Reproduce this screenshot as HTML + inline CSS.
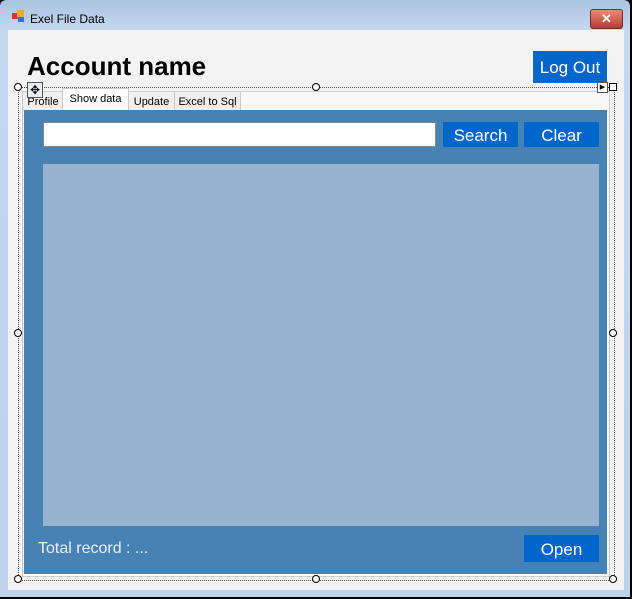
<!DOCTYPE html><html><head><style>
body{margin:0;width:632px;height:599px;background:#000;position:relative;overflow:hidden;font-family:"Liberation Sans",sans-serif}
.a{position:absolute}
.btn{position:absolute;background:#0066cc;color:#fff;font-size:17px;text-align:center}
</style></head><body>
<div class="a" style="left:0;top:0;width:630px;height:597px;background:linear-gradient(#a9c3e0,#c4d8ee 30px,#bcd3ec);border-radius:6px 6px 0 0"></div>
<div class="a" style="left:12px;top:13px;width:6px;height:6px;background:#d33"></div>
<div class="a" style="left:17px;top:10px;width:7px;height:7px;background:#f0b020"></div>
<div class="a" style="left:18px;top:17px;width:6px;height:5px;background:#3a70d0"></div>
<div class="a" style="left:30px;top:12px;font-size:12px;color:#000">Exel File Data</div>
<div class="a" style="left:590px;top:9px;width:31px;height:18px;background:linear-gradient(#e0907a,#c0392b);border:1px solid #7a2a20;border-radius:3px;color:#fff;font-size:13px;font-weight:bold;text-align:center;line-height:18px">✕</div>
<div class="a" style="left:8px;top:30px;width:616px;height:560px;background:#f3f3f3"></div>
<div class="a" style="left:27px;top:51px;font-size:26px;font-weight:bold;color:#000">Account name</div>
<div class="btn" style="left:533px;top:51px;width:74px;height:32px;line-height:33px">Log Out</div>
<div class="a" style="left:18px;top:87px;width:595px;height:492px;border:1px dotted #555"></div>
<div class="a" style="left:22px;top:91px;width:586px;height:484px;border:1px solid #ccc;background:#f8f8f8"></div>
<div class="a" style="left:22px;top:91px;width:40px;height:18px;border:1px solid #ccc;font-size:11px;line-height:20px;text-align:center;background:#f0f0f0">Profile</div>
<div class="a" style="left:62px;top:88px;width:65px;height:22px;border:1px solid #ccc;border-bottom:none;font-size:11px;line-height:21px;text-align:center;background:#fff">Show data</div>
<div class="a" style="left:128px;top:91px;width:45px;height:18px;border:1px solid #ccc;font-size:11px;line-height:20px;text-align:center;background:#f0f0f0">Update</div>
<div class="a" style="left:174px;top:91px;width:65px;height:18px;border:1px solid #ccc;font-size:11px;line-height:20px;text-align:center;background:#f0f0f0">Excel to Sql</div>
<div class="a" style="left:24px;top:110px;width:583px;height:464px;background:#4682b4"></div>
<div class="a" style="left:43px;top:122px;width:391px;height:23px;background:#fff;border:1px solid #888"></div>
<div class="btn" style="left:443px;top:122px;width:75px;height:25px;line-height:27px">Search</div>
<div class="btn" style="left:524px;top:122px;width:75px;height:25px;line-height:27px">Clear</div>
<div class="a" style="left:43px;top:164px;width:556px;height:362px;background:#98b3d0"></div>
<div class="a" style="left:38px;top:540px;font-size:16px;color:#eef">Total record : ...</div>
<div class="btn" style="left:524px;top:535px;width:75px;height:27px;line-height:29px">Open</div>
<div class="a" style="left:27px;top:82px;width:14px;height:14px;border:1px solid #555;background:#e8eef8;font-size:12px;line-height:14px;text-align:center">✥</div>
<div class="a" style="left:14px;top:83px;width:6px;height:6px;border:1px solid #000;border-radius:50%;background:#fff"></div>
<div class="a" style="left:312px;top:83px;width:6px;height:6px;border:1px solid #000;border-radius:50%;background:#fff"></div>
<div class="a" style="left:609px;top:83px;width:6px;height:6px;border:1px solid #000;background:#fff"></div>
<div class="a" style="left:14px;top:329px;width:6px;height:6px;border:1px solid #000;border-radius:50%;background:#fff"></div>
<div class="a" style="left:609px;top:329px;width:6px;height:6px;border:1px solid #000;border-radius:50%;background:#fff"></div>
<div class="a" style="left:14px;top:575px;width:6px;height:6px;border:1px solid #000;border-radius:50%;background:#fff"></div>
<div class="a" style="left:312px;top:575px;width:6px;height:6px;border:1px solid #000;border-radius:50%;background:#fff"></div>
<div class="a" style="left:609px;top:575px;width:6px;height:6px;border:1px solid #000;border-radius:50%;background:#fff"></div>
<div class="a" style="left:597px;top:82px;width:9px;height:9px;border:1px solid #555;background:#fff;font-size:7px;line-height:9px;text-align:center">▶</div>
</body></html>
